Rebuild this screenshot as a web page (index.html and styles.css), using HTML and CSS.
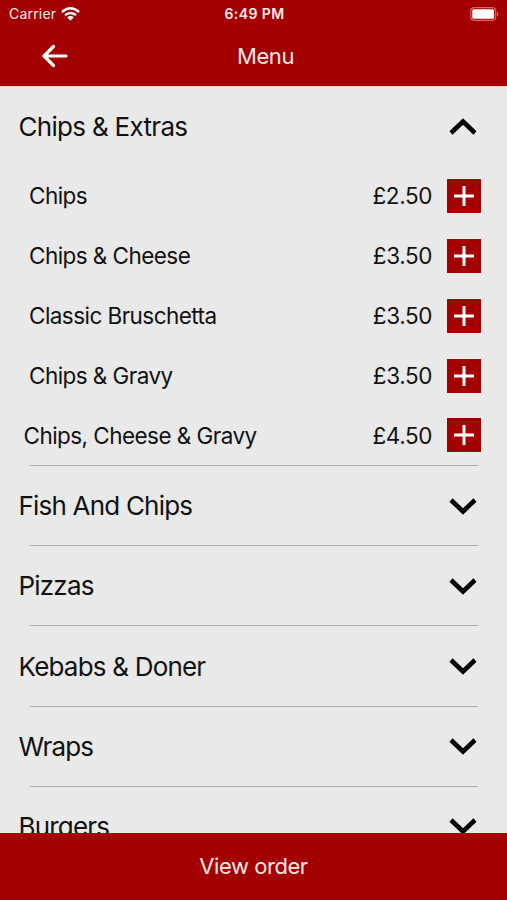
FILE: index.html
```html
<!DOCTYPE html>
<html lang="en">
<head>
<meta charset="UTF-8" />
<meta name="viewport" content="width=device-width, initial-scale=1" />
<title>Menu</title>
<link rel="stylesheet" href="styles.css">
</head>
<body>
<svg class="sprite" width="0" height="0">
  <symbol id="chevron" viewBox="0 0 28 18"><path d="M2 3 L14 14.500 L26 3" /></symbol>
  <symbol id="plus" viewBox="0 0 34 34"><path d="M7 17 H27 M17 7 V27" /></symbol>
</svg>

<header>
  <div class="status">
    <div class="carrier">
      <span>Carrier</span>
      <svg class="wifi" width="19" height="14" viewBox="0 0 19 14">
        <path d="M1 5 Q9.500 -2.400 18 5 M4 8.200 Q9.500 3.600 15 8.200" />
        <path class="dot" d="M6.200 10.300 Q9.500 7.800 12.800 10.300 L9.500 13.700 Z" />
      </svg>
    </div>
    <span class="time">6:49 PM</span>
    <svg class="battery" width="30" height="14" viewBox="0 0 30 14">
      <rect class="shell" x="0.700" y="0.700" width="25" height="12.600" rx="3.500" />
      <rect class="level" x="2.300" y="2.300" width="21.800" height="9.400" rx="1.500" />
      <path class="tip" d="M27 4.500 Q30 7 27 9.500 Z" />
    </svg>
  </div>
  <div class="nav">
    <button class="back" aria-label="Back">
      <svg width="28" height="24" viewBox="0 0 28 24"><path d="M25 12 H4 M12.500 2.500 L3 12 L12.500 21.500" /></svg>
    </button>
    <h1>Menu</h1>
  </div>
</header>

<main>
  <section class="category open">
    <h2><span>Chips &amp; Extras</span><svg class="chevron up"><use href="#chevron" /></svg></h2>
    <ul>
      <li><span class="name">Chips</span><span class="price">£2.50</span><button class="add" aria-label="Add"><svg><use href="#plus" /></svg></button></li>
      <li><span class="name">Chips &amp; Cheese</span><span class="price">£3.50</span><button class="add" aria-label="Add"><svg><use href="#plus" /></svg></button></li>
      <li><span class="name">Classic Bruschetta</span><span class="price">£3.50</span><button class="add" aria-label="Add"><svg><use href="#plus" /></svg></button></li>
      <li><span class="name">Chips &amp; Gravy</span><span class="price">£3.50</span><button class="add" aria-label="Add"><svg><use href="#plus" /></svg></button></li>
      <li class="wide"><span class="name">Chips, Cheese &amp; Gravy</span><span class="price">£4.50</span><button class="add" aria-label="Add"><svg><use href="#plus" /></svg></button></li>
    </ul>
  </section>
  <section class="category">
    <h2><span>Fish And Chips</span><svg class="chevron"><use href="#chevron" /></svg></h2>
  </section>
  <section class="category">
    <h2><span>Pizzas</span><svg class="chevron"><use href="#chevron" /></svg></h2>
  </section>
  <section class="category">
    <h2><span>Kebabs &amp; Doner</span><svg class="chevron"><use href="#chevron" /></svg></h2>
  </section>
  <section class="category">
    <h2><span>Wraps</span><svg class="chevron"><use href="#chevron" /></svg></h2>
  </section>
  <section class="category">
    <h2><span>Burgers</span><svg class="chevron"><use href="#chevron" /></svg></h2>
  </section>
</main>

<footer>
  <button class="order">View order</button>
</footer>
</body>
</html>
```
FILE: styles.css
```css
* { box-sizing: border-box; }
body { background: #e9e9e9; color: #111; font-family: Inter, "Liberation Sans", sans-serif; margin: 0; height: 900px; display: flex; flex-direction: column; overflow: hidden; }
h1, h2, ul { margin: 0; padding: 0; font-weight: 400; }
button { border: none; padding: 0; background: none; color: inherit; font: inherit; cursor: pointer; }
svg { display: block; fill: none; }
.sprite { position: absolute; }

header { flex: none; height: 87px; background: #a30000; color: #ffe9e6; border-bottom: 1px solid #f3d3d3; }
.status { display: grid; grid-template-columns: 1fr auto 1fr; align-items: center; height: 27px; padding: 0 7px 0 9px; font-size: 14px; }
.carrier { display: flex; align-items: center; gap: 5px; letter-spacing: 0.2px; }
.wifi { stroke: #fff; stroke-width: 2.4; }
.wifi .dot { fill: #fff; stroke: none; }
.time { font-weight: 600; letter-spacing: 0.4px; }
.battery { justify-self: end; }
.shell { stroke: #d66; stroke-width: 1.2; }
.level { fill: #fff; }
.tip { fill: #d66; }
.nav { display: grid; grid-template-columns: 1fr auto 1fr; align-items: center; height: 58px; padding: 0 17px 0 41px; }
.nav::after { content: ""; }
.nav h1 { font-size: 22px; letter-spacing: -0.4px; }
.back { justify-self: start; }
.back svg { stroke: #fff; stroke-width: 3.2; stroke-linecap: round; stroke-linejoin: round; }

main { flex: 1; min-height: 0; overflow: hidden; }
.category h2 { display: flex; align-items: center; justify-content: space-between; height: 79.1px; padding: 0 30px 0 18.5px; font-size: 26px; letter-spacing: -0.8px; }
.category::after { content: ""; display: block; height: 1px; margin: 0 29px 0 30px; background: #aaa; }
.category.open h2 { height: 79px; letter-spacing: -0.7px; }
.chevron { width: 28px; height: 18px; stroke: #000; stroke-width: 4.6; }
.chevron.up { transform: rotate(180deg); }
ul { list-style: none; }
li { display: flex; align-items: center; height: 59.87px; padding: 0 26px 0 29px; font-size: 22.5px; letter-spacing: -0.55px; }
li.wide { padding-left: 23.5px; }
.name { flex: 1; }
.price { margin-right: 15px; letter-spacing: -0.4px; }
.add { width: 34px; height: 34px; background: #a30000; }
.add svg { width: 34px; height: 34px; stroke: #fff; stroke-width: 3; }

footer { flex: none; height: 67px; background: #a30000; color: #ffe9e6; }
.order { width: 100%; height: 66px; font-size: 22px; letter-spacing: -0.45px; }
```
